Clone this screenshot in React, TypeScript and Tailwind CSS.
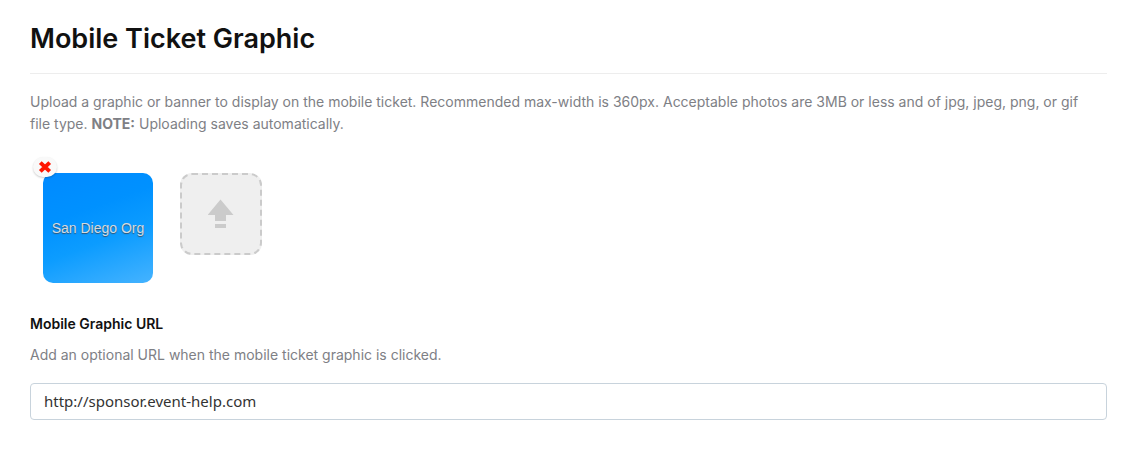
import { useState } from "react";

function TicketBanner() {
  return (
    <div
      role="img"
      aria-label="San Diego Org banner"
      className="ml-[13px] flex size-[110px] items-center justify-center rounded-[10px] bg-linear-[160deg,#008aff_0%,#0091ff_35%,#0c9cff_60%,#45b3ff_100%]"
    >
      <span className="font-['Liberation_Sans_Narrow','Liberation_Sans',sans-serif] text-sm leading-5 whitespace-nowrap text-[#d3dae0] [text-shadow:0_1px_1px_#31526e]">
        San Diego Org
      </span>
    </div>
  );
}

export default function App() {
  const [url, setUrl] = useState("http://sponsor.event-help.com");
  const [hasGraphic, setHasGraphic] = useState(true);

  return (
    <main className="bg-white pt-5 pr-[41px] pb-12 pl-[30px] font-['Inter',sans-serif] text-sm text-[#7e8085]">
      <h1 className="border-b border-[#ededed] pb-4 text-[27px] leading-[37px] font-semibold text-[#111]">
        Mobile Ticket Graphic
      </h1>
      <p className="mt-[17px] pr-4 leading-[22px]">
        Upload a graphic or banner to display on the mobile ticket. Recommended max-width is 360px. Acceptable photos
        are 3MB or less and of jpg, jpeg, png, or gif file type. <strong className="font-bold">NOTE:</strong> Uploading
        saves automatically.
      </p>

      <div className="mt-[38px] flex items-start gap-[27px]">
        {hasGraphic && (
          <div className="relative">
            <TicketBanner />
            <button
              type="button"
              aria-label="Remove graphic"
              onClick={() => setHasGraphic(false)}
              className="absolute -top-4 left-[3px] flex h-5 w-6 items-center justify-center rounded-[10px] bg-[#f9f9f9] shadow-[0_1px_2px_#00000033]"
            >
              <svg viewBox="0 0 14 14" className="size-[14px]" aria-hidden="true">
                <path d="M2.300 2.600l9.400 8.800M11.700 2.600l-9.400 8.800" stroke="#ff1500" strokeWidth="4" />
              </svg>
            </button>
          </div>
        )}
        <button
          type="button"
          aria-label="Upload graphic"
          className="flex size-[82px] items-center justify-center rounded-xl border-2 border-dashed border-[#cbcbcb] bg-[#efefef]"
        >
          <svg viewBox="0 0 26 30" className="h-[30px] w-[26px]" fill="#cbcbcb" aria-hidden="true">
            <path d="M12.500 .5l13 15.500h-7.500v6h-11v-6H-.5zM7 25h11v4h-11z" />
          </svg>
        </button>
      </div>

      <label htmlFor="graphic-url" className="mt-[30px] block leading-[22px] font-semibold text-[#111]">
        Mobile Graphic URL
      </label>
      <p id="graphic-url-help" className="mt-[9px] leading-[22px]">
        Add an optional URL when the mobile ticket graphic is clicked.
      </p>
      <input
        id="graphic-url"
        type="url"
        aria-describedby="graphic-url-help"
        value={url}
        onChange={(event) => setUrl(event.target.value)}
        className="mt-[17px] block h-[37px] w-full rounded border border-[#c8d3dc] bg-white px-[13px] pb-0.5 font-['Noto_Sans',sans-serif] text-[15px] text-[#333]"
      />
    </main>
  );
}
